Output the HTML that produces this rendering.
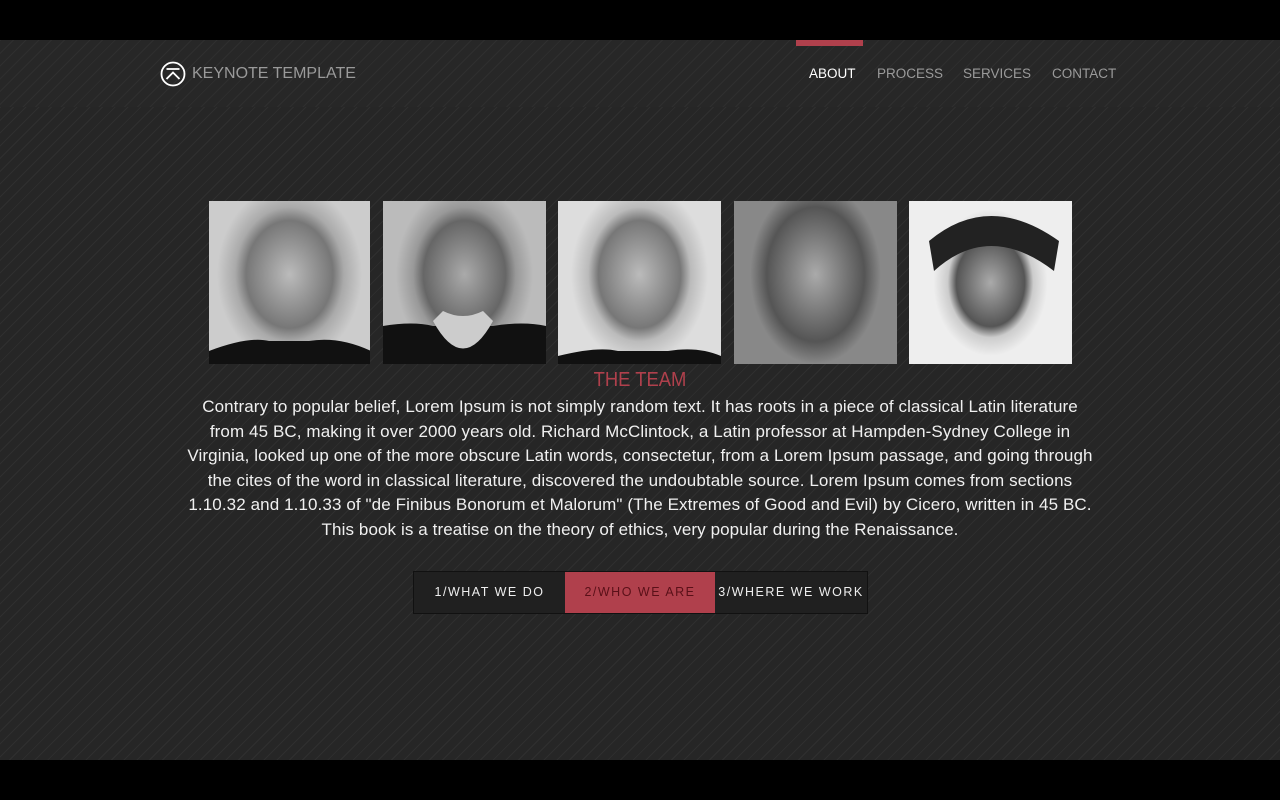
<!DOCTYPE html>
<html><head><meta charset="utf-8">
<style>
*{margin:0;padding:0;box-sizing:border-box}
body{width:1280px;height:800px;background:#000;overflow:hidden;font-family:"Liberation Sans",sans-serif}
.stripes{background-color:#262626;background-image:repeating-linear-gradient(135deg,rgba(255,255,255,0.045) 0 1px,transparent 1px 9px)}
#top{position:absolute;top:0;left:0;width:1280px;height:40px;background:#000}
#nav{position:absolute;top:40px;left:0;width:1280px;height:67px;background-color:#272727;background-image:repeating-linear-gradient(135deg,rgba(255,255,255,0.035) 0 1px,transparent 1px 9px)}
#main{position:absolute;top:107px;left:0;width:1280px;height:653px}
#bot{position:absolute;top:760px;left:0;width:1280px;height:40px;background:#000}
.logo{position:absolute;left:160px;top:21px;display:flex;align-items:center;color:#9a9a9a;font-size:16px;white-space:nowrap}
.logo svg{margin-right:6px}
.menu{position:absolute;top:26px;font-size:13.5px;color:#9a9a9a;white-space:nowrap}
.menu.act{color:#fff}
.bar{position:absolute;left:796px;top:0;width:67px;height:6px;background:#b0404c}
.ph{position:absolute;top:94px;width:162px;height:163px;overflow:hidden}
h2{position:absolute;top:262px;left:0;width:1280px;text-align:center;color:#b0404c;font-weight:normal;font-size:20px;transform:scaleX(0.92)}
p{position:absolute;top:288px;left:0;width:1280px;text-align:center;color:#f0f0f0;font-size:17px;line-height:24.5px;white-space:nowrap;letter-spacing:0.1px}
.tabs{position:absolute;top:464px;left:413px;display:flex;border:1px solid #111}
.tab{height:41px;line-height:41px;text-align:center;color:#eee;font-size:12.5px;letter-spacing:1.5px;background:#202020;white-space:nowrap}
.tab.on{background:#b0404c;color:#5a1018}
</style></head><body>
<div id="top"></div>
<div id="nav">
 <div class="bar"></div>
 <div class="logo"><svg width="26" height="26" viewBox="0 0 26 26"><circle cx="13" cy="13" r="11.5" fill="none" stroke="#fff" stroke-width="1.8"/><line x1="6.5" y1="8" x2="19.5" y2="8" stroke="#fff" stroke-width="1.8"/><polyline points="6.5,18 13,11.5 19.5,18" fill="none" stroke="#fff" stroke-width="1.8"/></svg>KEYNOTE TEMPLATE</div>
 <div class="menu act" style="left:809px">ABOUT</div>
 <div class="menu" style="left:877px">PROCESS</div>
 <div class="menu" style="left:963px">SERVICES</div>
 <div class="menu" style="left:1052px">CONTACT</div>
</div>
<div id="main" class="stripes">
 <div class="ph" style="left:209px;width:161px;background:radial-gradient(ellipse 45% 55% at 50% 45%,#bbb,#777 60%,#aaa 75%,#ccc)"><svg width="162" height="163"><path d="M0 163 L0 150 Q40 135 60 140 L100 140 Q130 135 162 150 L162 163Z" fill="#111"/></svg></div>
 <div class="ph" style="left:383px;width:163px;background:radial-gradient(ellipse 42% 55% at 50% 45%,#aaa,#666 60%,#999 75%,#bbb)"><svg width="163" height="163"><path d="M0 163 L0 125 Q30 120 50 125 L110 125 Q140 120 163 125 L163 163Z" fill="#111"/><path d="M50 120 Q80 175 110 120 L100 110 Q80 120 60 110Z" fill="#ccc"/></svg></div>
 <div class="ph" style="left:558px;width:163px;background:radial-gradient(ellipse 42% 55% at 50% 45%,#bbb,#777 60%,#bbb 75%,#ddd)"><svg width="163" height="163"><path d="M0 163 L0 155 Q40 145 60 150 L110 150 Q140 145 163 155 L163 163Z" fill="#111"/></svg></div>
 <div class="ph" style="left:734px;width:163px;background:radial-gradient(ellipse 40% 55% at 50% 45%,#aaa,#666 60%,#555 75%,#888)"></div>
 <div class="ph" style="left:909px;width:163px;background:radial-gradient(ellipse 35% 45% at 50% 50%,#aaa,#555 60%,#ccc 75%,#eee)"><svg width="163" height="163"><path d="M20 40 Q80 -10 150 40 L145 70 Q80 20 25 70Z" fill="#222"/></svg></div>
 <h2>THE TEAM</h2>
 <p>Contrary to popular belief, Lorem Ipsum is not simply random text. It has roots in a piece of classical Latin literature<br>from 45 BC, making it over 2000 years old. Richard McClintock, a Latin professor at Hampden-Sydney College in<br>Virginia, looked up one of the more obscure Latin words, consectetur, from a Lorem Ipsum passage, and going through<br>the cites of the word in classical literature, discovered the undoubtable source. Lorem Ipsum comes from sections<br>1.10.32 and 1.10.33 of "de Finibus Bonorum et Malorum" (The Extremes of Good and Evil) by Cicero, written in 45 BC.<br>This book is a treatise on the theory of ethics, very popular during the Renaissance.</p>
 <div class="tabs">
  <div class="tab" style="width:151px">1/WHAT WE DO</div>
  <div class="tab on" style="width:150px">2/WHO WE ARE</div>
  <div class="tab" style="width:152px">3/WHERE WE WORK</div>
 </div>
</div>
<div id="bot"></div>
</body></html>
